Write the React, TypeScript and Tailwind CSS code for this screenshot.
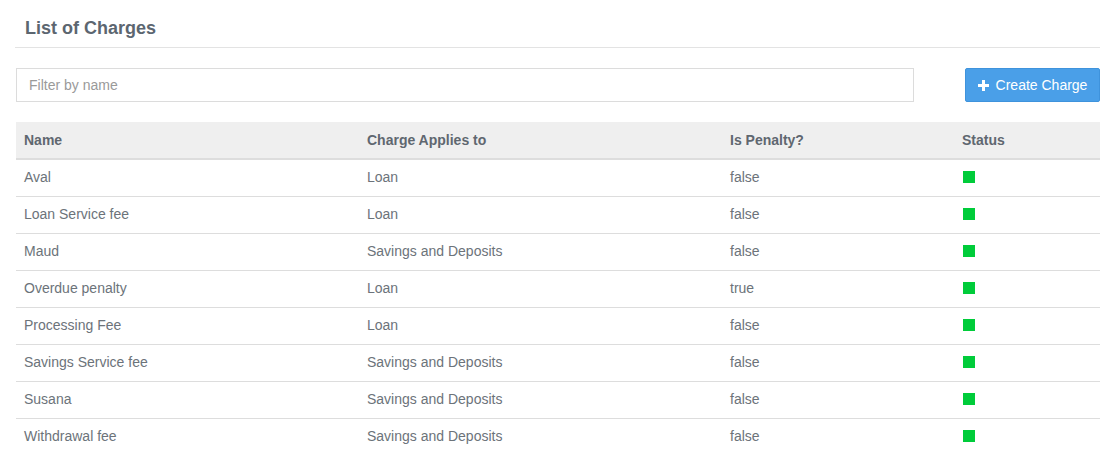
const charges = [
  { name: 'Aval', appliesTo: 'Loan', penalty: 'false' },
  { name: 'Loan Service fee', appliesTo: 'Loan', penalty: 'false' },
  { name: 'Maud', appliesTo: 'Savings and Deposits', penalty: 'false' },
  { name: 'Overdue penalty', appliesTo: 'Loan', penalty: 'true' },
  { name: 'Processing Fee', appliesTo: 'Loan', penalty: 'false' },
  { name: 'Savings Service fee', appliesTo: 'Savings and Deposits', penalty: 'false' },
  { name: 'Susana', appliesTo: 'Savings and Deposits', penalty: 'false' },
  { name: 'Withdrawal fee', appliesTo: 'Savings and Deposits', penalty: 'false' },
];

export default function App() {
  return (
    <div
      className="min-h-screen bg-white px-[15px] pt-[16px] text-[#6c737a]"
      style={{ fontFamily: '"Liberation Sans", Arial, sans-serif' }}
    >
      <div className="border-b border-[#e3e3e3] pl-[10px] pb-[7px]">
        <h1 className="text-[18px] font-bold leading-[24px] text-[#5c6670]">List of Charges</h1>
      </div>

      <div className="mt-[20px] flex items-center justify-between pl-[1px]">
        <input
          type="text"
          placeholder="Filter by name"
          className="h-[34px] w-[898px] border border-[#dcdcdc] px-[12px] text-[14px] text-[#555] placeholder:text-[#9a9a9a] outline-none"
        />
        <button className="flex h-[34px] w-[135px] items-center justify-center gap-[7px] rounded-[2px] border border-[#3f93dc] bg-[#4a9fe8] text-[14px] text-white">
          <svg width="11" height="11" viewBox="0 0 11 11" fill="white">
            <rect x="4" y="0" width="3" height="11" />
            <rect x="0" y="4" width="11" height="3" />
          </svg>
          Create Charge
        </button>
      </div>

      <table className="mt-[20px] ml-[1px] w-[1084px] table-fixed border-collapse text-[14px]">
        <thead>
          <tr className="h-[37px] border-b-2 border-[#dddddd] bg-[#efefef] text-left">
            <th className="w-[343px] px-[8px] font-bold text-[#5f6770]">Name</th>
            <th className="w-[363px] px-[8px] font-bold text-[#5f6770]">Charge Applies to</th>
            <th className="w-[232px] px-[8px] font-bold text-[#5f6770]">Is Penalty?</th>
            <th className="px-[8px] font-bold text-[#5f6770]">Status</th>
          </tr>
        </thead>
        <tbody>
          {charges.map((c, i) => (
            <tr
              key={c.name}
              className={`h-[37px] ${i < charges.length - 1 ? 'border-b border-[#dddddd]' : ''}`}
            >
              <td className="px-[8px]">{c.name}</td>
              <td className="px-[8px]">{c.appliesTo}</td>
              <td className="px-[8px]">{c.penalty}</td>
              <td className="px-[8px]">
                <div className="ml-[1px] -mt-[1px] h-[12px] w-[12px] bg-[#00cc3a]" />
              </td>
            </tr>
          ))}
        </tbody>
      </table>
    </div>
  );
}
